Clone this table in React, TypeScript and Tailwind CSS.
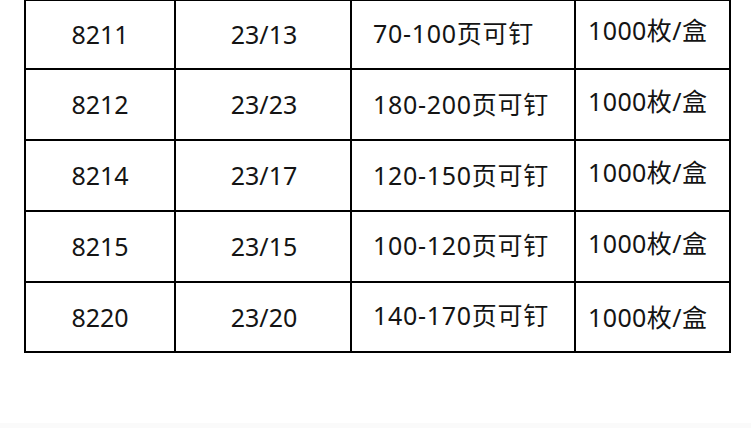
import React from "react";

const rows = [
  { a: "8211", b: "23/13", c: "70-100页可钉", d: "1000枚/盒", h: "h-[69px]", cOff: "pb-[2px]", dOff: "pb-[8px]" },
  { a: "8212", b: "23/23", c: "180-200页可钉", d: "1000枚/盒", h: "h-[71px]", cOff: "pb-[0px]", dOff: "pb-[6px]" },
  { a: "8214", b: "23/17", c: "120-150页可钉", d: "1000枚/盒", h: "h-[71px]", cOff: "pb-[0px]", dOff: "pb-[6px]" },
  { a: "8215", b: "23/15", c: "100-120页可钉", d: "1000枚/盒", h: "h-[71px]", cOff: "pb-[2px]", dOff: "pb-[6px]" },
  { a: "8220", b: "23/20", c: "140-170页可钉", d: "1000枚/盒", h: "h-[70px]", cOff: "pb-[4px]", dOff: "pb-[0px]" },
];

export default function App() {
  return (
    <div
      className="relative w-[751px] h-[428px] bg-white overflow-hidden text-[#141414] text-[25px] leading-none"
      style={{ fontFamily: '"Noto Sans", "Noto Sans CJK SC", sans-serif' }}
    >
      <div className="ml-[24px] w-[707px] border-l-2 border-t border-black grid grid-cols-[150px_176px_224px_155px]">
        {rows.map((r) => (
          <React.Fragment key={r.a}>
            <div className={`${r.h} border-r-2 border-b-2 border-black flex items-center justify-center`}>{r.a}</div>
            <div className={`${r.h} border-r-2 border-b-2 border-black flex items-center justify-center pl-[2px]`}>{r.b}</div>
            <div className={`${r.h} border-r-2 border-b-2 border-black flex items-center pl-[21px] tracking-[0.7px] ${r.cOff}`}>{r.c}</div>
            <div className={`${r.h} border-r-2 border-b-2 border-black flex items-center pl-[12px] tracking-[0.4px] ${r.dOff}`}>{r.d}</div>
          </React.Fragment>
        ))}
      </div>
      <div className="absolute left-0 bottom-0 w-full h-[5px] bg-[#fafafa]" />
    </div>
  );
}
